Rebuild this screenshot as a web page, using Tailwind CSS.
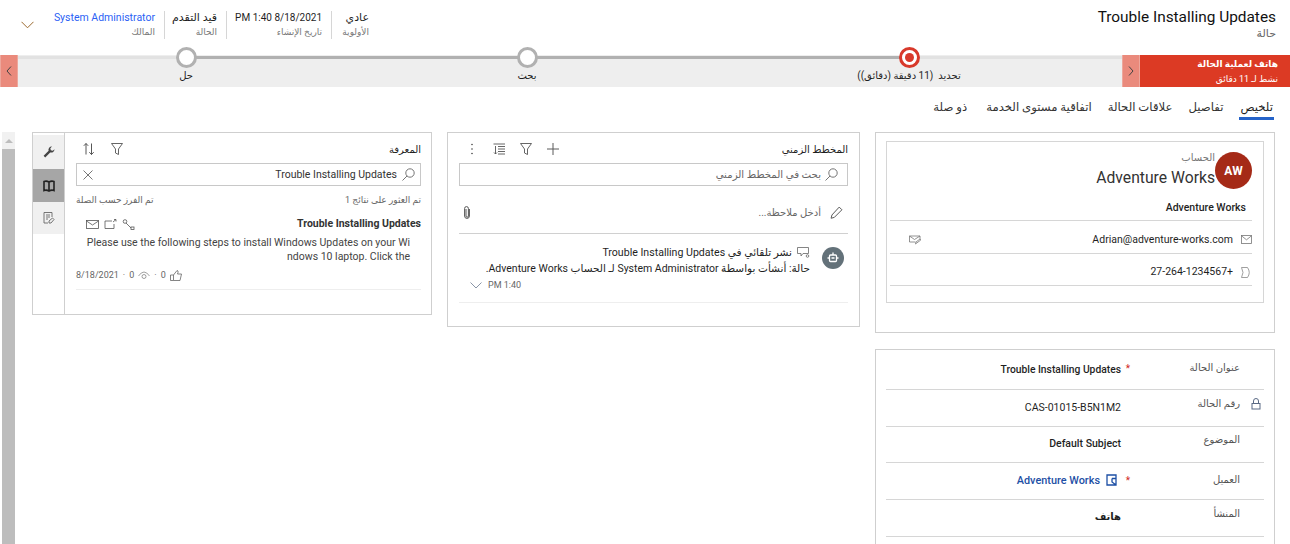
<!DOCTYPE html>
<html lang="ar" dir="rtl">
<head>
    <meta charset="UTF-8">
    <meta name="viewport" content="width=device-width, initial-scale=1.0">
    <title>Trouble Installing Updates - حالة</title>
    <script src="https://cdn.jsdelivr.net/npm/@tailwindcss/browser@4"></script>
</head>
<body class="bg-white">
    <div class="h-[544px] w-[1290px] overflow-hidden font-['Roboto','DejaVu_Sans',sans-serif] text-[10.5px] whitespace-nowrap text-[#1f1f1f]">
        <!-- Record header -->
        <header class="flex h-[55px] items-start justify-between pr-3.5">
            <div class="pt-[8px]">
                <h1 class="text-[15.4px] leading-[19px] text-[#111]">Trouble Installing Updates</h1>
                <p class="text-[11px] leading-[14px] text-[#666]">حالة</p>
            </div>
            <div class="flex items-center pt-[11px] pl-[21px]">
                <div class="flex h-[28px] items-stretch">
                    <div class="w-[38px] border-l border-[#d6d6d6]">
                        <p class="text-[11px] leading-[13px] font-medium">عادي</p>
                        <p class="mt-[2px] text-[9px] leading-[13px] text-[#777]">الأولوية</p>
                    </div>
                    <div class="mr-[9px] w-[96px] border-l border-[#d6d6d6]">
                        <p class="text-[10px] leading-[13px]">8/18/2021 1:40 PM</p>
                        <p class="mt-[2px] text-[9px] leading-[13px] text-[#777]">تاريخ الإنشاء</p>
                    </div>
                    <div class="mr-[9px] w-[53px] border-l border-[#d6d6d6]">
                        <p class="text-[11px] leading-[13px] font-medium">قيد التقدم</p>
                        <p class="mt-[2px] text-[9px] leading-[13px] text-[#777]">الحالة</p>
                    </div>
                    <div class="mr-[9px] w-[102px]">
                        <p class="leading-[13px] text-[#2b5ff5]">System Administrator</p>
                        <p class="mt-[2px] text-[9px] leading-[13px] text-[#777]">المالك</p>
                    </div>
                </div>
                <svg class="mr-[19px] h-[8px] w-[13px] text-[#9b6a2f]" viewBox="0 0 13 8" fill="none" stroke="currentColor"><path d="M.5.8l6 6 6-6"/></svg>
            </div>
        </header>

        <!-- Business process flow -->
        <div class="flex h-8 bg-[#eeeeee]">
            <div class="flex w-[150px] flex-col justify-center bg-[#dc3a24] pt-[1px] pr-[12px] text-white">
                <p class="text-[9px] leading-[15px] font-bold">هاتف لعملية الحالة</p>
                <p class="text-[9px] leading-[15px]">نشط لـ 11 دقائق</p>
            </div>
            <button class="flex w-[18px] items-center justify-center border-x border-[#eda79c] bg-[#ea8a7c]">
                <svg class="h-[10px] w-[6px]" viewBox="0 0 6 10" fill="none" stroke="#444"><path d="M1 .5l4 4.500-4 4.500"/></svg>
            </button>
            <div class="relative flex flex-1">
                <div class="absolute top-[1px] right-0 left-0 h-[3px] bg-[#e2e2e2]"></div>
                <div class="absolute top-[1px] right-[214px] left-[168px] h-[3px] bg-[#b1b1b1]"></div>
                <div class="relative mr-[4px] flex w-[418px] flex-col items-center">
                    <span class="mt-[-8px] flex h-[21px] w-[21px] items-center justify-center rounded-full border-[3px] border-[#d8392b] bg-white">
                        <span class="h-[9px] w-[9px] rounded-full bg-[#d8392b]"></span>
                    </span>
                    <span class="mt-[1px] text-[10px] leading-[13px]">تحديد&nbsp; (11 دقيقة (دقائق))</span>
                </div>
                <div class="relative flex w-[346px] flex-col items-center">
                    <span class="mt-[-8px] h-[21px] w-[21px] rounded-full border-[3px] border-[#b1b1b1] bg-white"></span>
                    <span class="mt-[1px] text-[10px] leading-[13px]">بحث</span>
                </div>
                <div class="relative flex w-[336px] flex-col items-center">
                    <span class="mt-[-8px] h-[21px] w-[21px] rounded-full border-[3px] border-[#b1b1b1] bg-white"></span>
                    <span class="mt-[1px] text-[10px] leading-[13px]">حل</span>
                </div>
            </div>
            <button class="flex w-[18px] items-center justify-center border-x border-[#eda79c] bg-[#ea8a7c]">
                <svg class="h-[10px] w-[6px]" viewBox="0 0 6 10" fill="none" stroke="#444"><path d="M5 .5L1 5l4 4.500"/></svg>
            </button>
        </div>

        <!-- Tabs -->
        <nav class="flex h-[45px] gap-4 pt-[10px] pr-4 text-[11.7px] leading-[20px] text-[#333]">
            <a class="h-[23px] border-b-[3px] border-[#2563c9] px-[1px] font-medium text-[#222]">تلخيص</a>
            <a>تفاصيل</a>
            <a>علاقات الحالة</a>
            <a>اتفاقية مستوى الخدمة</a>
            <a class="mr-[3px]">ذو صلة</a>
        </nav>

        <main class="flex items-start gap-[15px] pr-[15px]">
            <!-- Account and case details -->
            <section class="w-[400px] shrink-0">
                <div class="h-[201px] border border-[#cfcfcf] px-[10px] pt-2">
                    <div class="h-[162px] border border-[#d6d6d6] pr-[11px] pl-[3px]">
                        <div class="flex pt-[10px]">
                            <span class="flex h-[37px] w-[37px] shrink-0 items-center justify-center rounded-full bg-[#a52a17] text-xs font-bold text-white">AW</span>
                            <div>
                                <p class="text-[10px] leading-[12px] text-[#777]">الحساب</p>
                                <p class="mt-[3px] text-[15.7px] leading-[22px] text-[#333]">Adventure Works</p>
                            </div>
                        </div>
                        <p class="h-[32px] border-b border-[#d6d6d6] pt-[12px] pr-[6px] leading-[14px] font-medium">Adventure Works</p>
                        <div class="flex h-[33px] items-center border-b border-[#d6d6d6] pt-[5px]">
                            <svg class="ml-[8px] h-[9px] w-[11px] text-[#777]" viewBox="0 0 11 9" fill="none" stroke="currentColor" stroke-width=".8"><rect x=".5" y=".5" width="10" height="8"/><path d="M.5.8l5 4 5-4"/></svg>
                            <span class="flex-1 leading-[14px]">Adrian@adventure-works.com</span>
                            <svg class="ml-[19px] h-[10px] w-[12px] text-[#777]" viewBox="0 0 12 10" fill="none" stroke="currentColor" stroke-width=".8"><path d="M.5 1h10.500v3M.5 1v6h6M.5 1l5 3.500L11 1M6.500 9l.5-2 4-3 .8 1-4 3z"/></svg>
                        </div>
                        <div class="flex h-[32px] items-center border-b border-[#d6d6d6] pt-[5px]">
                            <svg class="ml-[8px] h-[11px] w-[11px] text-[#888]" viewBox="0 0 11 11" fill="none" stroke="currentColor" stroke-width=".8"><path d="M.5.5h6q3.500 5 0 10h-6q3-5 0-10z"/></svg>
                            <span dir="ltr" class="leading-[14px]">27-264-1234567+</span>
                        </div>
                    </div>
                </div>

                <div class="mt-[16px] h-[260px] border border-[#cfcfcf] px-[10px] pt-[3px]">
                    <div class="flex h-[37px] items-start border-b border-[#d6d6d6] pt-[8px]">
                        <span class="w-[24px]"></span>
                        <span class="w-[110px] text-[10px] leading-[14px] text-[#555]">عنوان الحالة</span>
                        <span class="w-[9px] text-[10px] text-[#d0281c]">*</span>
                        <span class="pt-[2px] text-[10.3px] leading-[14px] font-medium">Trouble Installing Updates</span>
                    </div>
                    <div class="flex h-[37px] items-start border-b border-[#d6d6d6] pt-[7px]">
                        <svg class="mt-[1px] mr-[3px] ml-[11px] h-[12px] w-[10px] text-[#5a6a85]" viewBox="0 0 10 12" fill="none" stroke="currentColor"><rect x="1" y="5.500" width="8" height="5.500"/><path d="M2.500 5.500V3a2.500 2.500 0 015 0v2.500"/></svg>
                        <span class="w-[119px] text-[10px] leading-[14px] text-[#555]">رقم الحالة</span>
                        <span class="mt-[4px] leading-[14px]">CAS-01015-B5N1M2</span>
                    </div>
                    <div class="flex h-[36px] items-start border-b border-[#d6d6d6] pt-[6px]">
                        <span class="w-[24px]"></span>
                        <span class="w-[119px] text-[10px] leading-[14px] text-[#555]">الموضوع</span>
                        <span class="mt-[4px] leading-[14px] font-medium">Default Subject</span>
                    </div>
                    <div class="flex h-[37px] items-start border-b border-[#d6d6d6] pt-[10px]">
                        <span class="w-[24px]"></span>
                        <span class="w-[110px] text-[10px] leading-[14px] text-[#555]">العميل</span>
                        <span class="w-[9px] text-[10px] text-[#d0281c]">*</span>
                        <svg class="mt-[1px] mr-[3px] ml-[6px] h-[12px] w-[12px] text-[#1d4fa5]" viewBox="0 0 12 12" fill="none" stroke="currentColor" stroke-width="1.300"><path d="M1 1h9v10H1zM6 4.500h4M6 4.500V8l4 3"/></svg>
                        <span class="mt-[1px] text-[10.9px] leading-[14px] font-medium text-[#1d4fa5]">Adventure Works</span>
                    </div>
                    <div class="flex h-[37px] items-start border-b border-[#d6d6d6] pt-[7px]">
                        <span class="w-[24px]"></span>
                        <span class="w-[119px] text-[10px] leading-[14px] text-[#555]">المنشأ</span>
                        <span class="mt-[3px] text-[10px] leading-[14px] font-bold">هاتف</span>
                    </div>
                </div>
            </section>

            <!-- Timeline -->
            <section class="h-[195px] w-[413px] shrink-0 border border-[#cfcfcf] px-[11px]">
                <div class="flex h-[30px] items-center justify-between pt-[2px]">
                    <h2 class="text-[10px] font-medium">المخطط الزمني</h2>
                    <div class="flex items-center gap-[15px] pl-[11px]">
                        <svg class="h-[12px] w-[12px] text-[#5b5b5b]" viewBox="0 0 12 12" stroke="currentColor"><path d="M6 0v12M0 6h12"/></svg>
                        <svg class="h-[12px] w-[12px] text-[#555]" viewBox="0 0 12 12" fill="none" stroke="currentColor" stroke-width=".9"><path d="M.5.5h11L7.500 6v5.500l-3-1.500V6z"/></svg>
                        <svg class="h-[12px] w-[12px] text-[#555]" viewBox="0 0 12 12" fill="none" stroke="currentColor" stroke-width=".9"><path d="M.5 1H12M5 3.500h7M5 6h7M5 8.500h7M5 11h7M2.500 3v8M1 9.500L2.500 11 4 9.500"/></svg>
                        <svg class="mr-[4px] h-[12px] w-[4px] text-[#444]" viewBox="0 0 4 12" fill="currentColor"><circle cx="2" cy="1.500" r=".8"/><circle cx="2" cy="6" r=".8"/><circle cx="2" cy="10.500" r=".8"/></svg>
                    </div>
                </div>
                <div class="flex h-[23px] items-center gap-[4px] border border-[#c8c8c8] pr-[9px]">
                    <svg class="h-[13px] w-[13px] text-[#666]" viewBox="0 0 13 13" fill="none" stroke="currentColor" stroke-width=".9"><circle cx="8" cy="5" r="4.200"/><path d="M5 8l-4.500 4.500"/></svg>
                    <span class="text-[10.2px] text-[#666]">بحث في المخطط الزمني</span>
                </div>
                <div class="flex h-[48px] items-center border-b border-[#d0d0d0] pt-[6px]">
                    <svg class="mr-[5px] ml-[9px] h-[13px] w-[13px] text-[#555]" viewBox="0 0 12 12" fill="none" stroke="currentColor" stroke-width=".9"><path d="M8.500 1l2.500 2.500L4 10.500l-3 .8.800-3z"/></svg>
                    <span class="flex-1 text-[10px] text-[#666]">أدخل ملاحظة...</span>
                    <svg class="ml-[5px] h-[13px] w-[6px] text-[#555]" viewBox="0 0 6 13" fill="none" stroke="currentColor"><path d="M2 3v7a1.200 1.200 0 002.400 0V2.500a1.900 1.900 0 00-3.800 0V10a2.400 2.400 0 004.800 0V3"/></svg>
                </div>
                <div class="flex h-[69px] border-b border-[#eeeeee] pt-[11px] pr-[4px]">
                    <span class="mt-[2px] flex h-[22px] w-[22px] shrink-0 items-center justify-center rounded-full bg-[#637179]">
                        <svg class="h-[12px] w-[12px] text-white" viewBox="0 0 12 12" fill="none" stroke="currentColor" stroke-width="1.300"><rect x="2.500" y="3" width="7" height="6.500" rx="1"/><path d="M6 .5V3M.5 6h2M9.500 6h2M4.500 6h3"/></svg>
                    </span>
                    <div class="mr-[12px] flex-1">
                        <p class="flex items-center gap-[5px] text-[10.6px] leading-[16px]">
                            <svg class="h-[12px] w-[13px] text-[#666]" viewBox="0 0 13 12" fill="none" stroke="currentColor" stroke-width=".8"><path d="M.5.500h11v6H6l-2 2.500V6.500H.5z"/><circle cx="10.500" cy="9" r="1.300"/></svg>
                            <span>نشر تلقائي في Trouble Installing Updates</span>
                        </p>
                        <p class="leading-[16px]">حالة: أنشأت بواسطة System Administrator لـ الحساب Adventure Works.</p>
                        <p dir="ltr" class="flex items-center gap-[6px] pl-[11px] text-[9px] leading-[17px] text-[#666]">
                            <svg class="h-[7px] w-[12px] text-[#6c7a90]" viewBox="0 0 12 7" fill="none" stroke="currentColor" stroke-width=".8"><path d="M.5.500L6 6l5.500-5.500"/></svg>
                            <span>PM 1:40</span>
                        </p>
                    </div>
                </div>
            </section>

            <!-- Knowledge search, with the side tabs at its far end -->
            <section class="flex h-[183px] w-[400px] shrink-0 border border-[#cfcfcf]">
                <div class="flex-1 pr-[10px] pl-[11px]">
                    <div class="flex h-[30px] items-center justify-between pt-[2px]">
                        <h2 class="text-[10px] font-medium">المعرفة</h2>
                        <div class="flex items-center gap-[16px] pl-[7px]">
                            <svg class="h-[12px] w-[12px] text-[#555]" viewBox="0 0 12 12" fill="none" stroke="currentColor" stroke-width=".9"><path d="M.5.500h11L7.500 6v5.500l-3-1.500V6z"/></svg>
                            <svg class="h-[12px] w-[12px] text-[#444]" viewBox="0 0 12 12" fill="none" stroke="currentColor" stroke-width=".9"><path d="M3 11.500V.5M.8 2.800L3 .5l2.200 2.300M8.500.5v11M6.300 9.200l2.200 2.300 2.200-2.300"/></svg>
                        </div>
                    </div>
                    <div class="flex h-[23px] items-center gap-[5px] border border-[#c8c8c8] pr-[5px] pl-[6px]">
                        <svg class="h-[13px] w-[13px] text-[#666]" viewBox="0 0 13 13" fill="none" stroke="currentColor" stroke-width=".9"><circle cx="8" cy="5" r="4.200"/><path d="M5 8l-4.500 4.500"/></svg>
                        <span class="flex-1 text-[#333]">Trouble Installing Updates</span>
                        <svg class="h-[10px] w-[10px] text-[#666]" viewBox="0 0 10 10" stroke="currentColor" stroke-width=".9"><path d="M.5.5l9 9M9.500.5l-9 9"/></svg>
                    </div>
                    <div class="mt-[7px] flex justify-between text-[9px] leading-[14px] text-[#666]">
                        <span>تم العثور على نتائج 1</span>
                        <span>تم الفرز حسب الصلة</span>
                    </div>
                    <div class="mt-[9px] flex items-center justify-between">
                        <span class="leading-[16px] font-bold text-[#333]">Trouble Installing Updates</span>
                        <div class="flex items-center gap-[5px] pl-[10px]">
                            <svg class="h-[11px] w-[13px] text-[#555]" viewBox="0 0 13 11" fill="none" stroke="currentColor" stroke-width=".8"><circle cx="3" cy="2.500" r="1.800"/><path d="M4 4l5 5"/><rect x="9" y="8" width="3" height="2.500"/></svg>
                            <svg class="h-[10px] w-[13px] text-[#555]" viewBox="0 0 13 10" fill="none" stroke="currentColor" stroke-width=".8"><path d="M8 2H1v7.500h9V5M9 3l3-2.500M10 .5h2v2"/></svg>
                            <svg class="h-[9px] w-[13px] text-[#555]" viewBox="0 0 13 9" fill="none" stroke="currentColor" stroke-width=".8"><rect x=".5" y=".5" width="12" height="8"/><path d="M.5 1l6 4 6-4"/></svg>
                        </div>
                    </div>
                    <p class="mt-[4px] pr-[11px] leading-[14px] text-[#444]">Please use the following steps to install Windows Updates on your Wi<br>ndows 10 laptop. Click the</p>
                    <div dir="ltr" class="mt-[3px] flex h-[23px] items-center gap-[4px] border-b border-[#eeeeee] pb-[6px] text-[9px] leading-[13px] text-[#666]">
                        <span>8/18/2021</span><span>·</span><span>0</span>
                        <svg class="h-[9px] w-[12px] text-[#777]" viewBox="0 0 12 9" fill="none" stroke="currentColor" stroke-width=".7"><path d="M.5 5q5.500-8 11 0"/><circle cx="6" cy="5.500" r="2"/></svg>
                        <span>·</span><span>0</span>
                        <svg class="h-[12px] w-[12px] text-[#666]" viewBox="0 0 12 12" fill="none" stroke="currentColor" stroke-width=".8"><path d="M.5 6h3v5.500h-3zM3.500 6L7 1.500q1.500 0 1 2L7.500 5h4l-1.500 6.500H3.500"/></svg>
                    </div>
                </div>
                <div class="w-[32px] border-r border-[#cfcfcf] pt-[2px]">
                    <div class="flex h-[34px] items-center justify-center bg-[#f0f0f0]">
                        <svg class="h-[12px] w-[12px] text-[#444]" viewBox="0 0 12 12" fill="currentColor"><path d="M11.500 3.200a3.300 3.300 0 01-4.300 3.200l-5 5L.6 9.800l5-5A3.300 3.300 0 019 .5L7.300 2.200l.5 2 2 .5z"/></svg>
                    </div>
                    <div class="flex h-[33px] items-center justify-center bg-[#a6a6a6]">
                        <svg class="h-[12px] w-[12px] text-[#222]" viewBox="0 0 12 12" fill="none" stroke="currentColor" stroke-width="1.600"><path d="M1 1.500q2.500-1 5 .5 2.500-1.500 5-.5v9q-2.500-1-5 .5-2.500-1.500-5-.5zM6 2v9"/></svg>
                    </div>
                    <div class="flex h-[32px] items-center justify-center bg-[#f0f0f0]">
                        <svg class="h-[12px] w-[12px] text-[#666]" viewBox="0 0 12 12" fill="none" stroke="currentColor" stroke-width=".9"><path d="M5 11H1V.5h8V5M3 3h4M3 5h4M3 7h2M6 11V9l3.500-3 1.500 1.500L8 11z"/></svg>
                    </div>
                </div>
            </section>

            <!-- Page scrollbar -->
            <div class="mr-[2px] h-[412px] w-[13px] shrink-0 bg-[#f1f1f1]">
                <div class="flex h-[17px] items-center justify-center">
                    <span class="h-0 w-0 border-x-[4px] border-b-[4px] border-x-transparent border-b-[#bdbdbd]"></span>
                </div>
                <div class="h-full bg-[#bdbdbd]"></div>
            </div>
        </main>
    </div>
</body>
</html>
